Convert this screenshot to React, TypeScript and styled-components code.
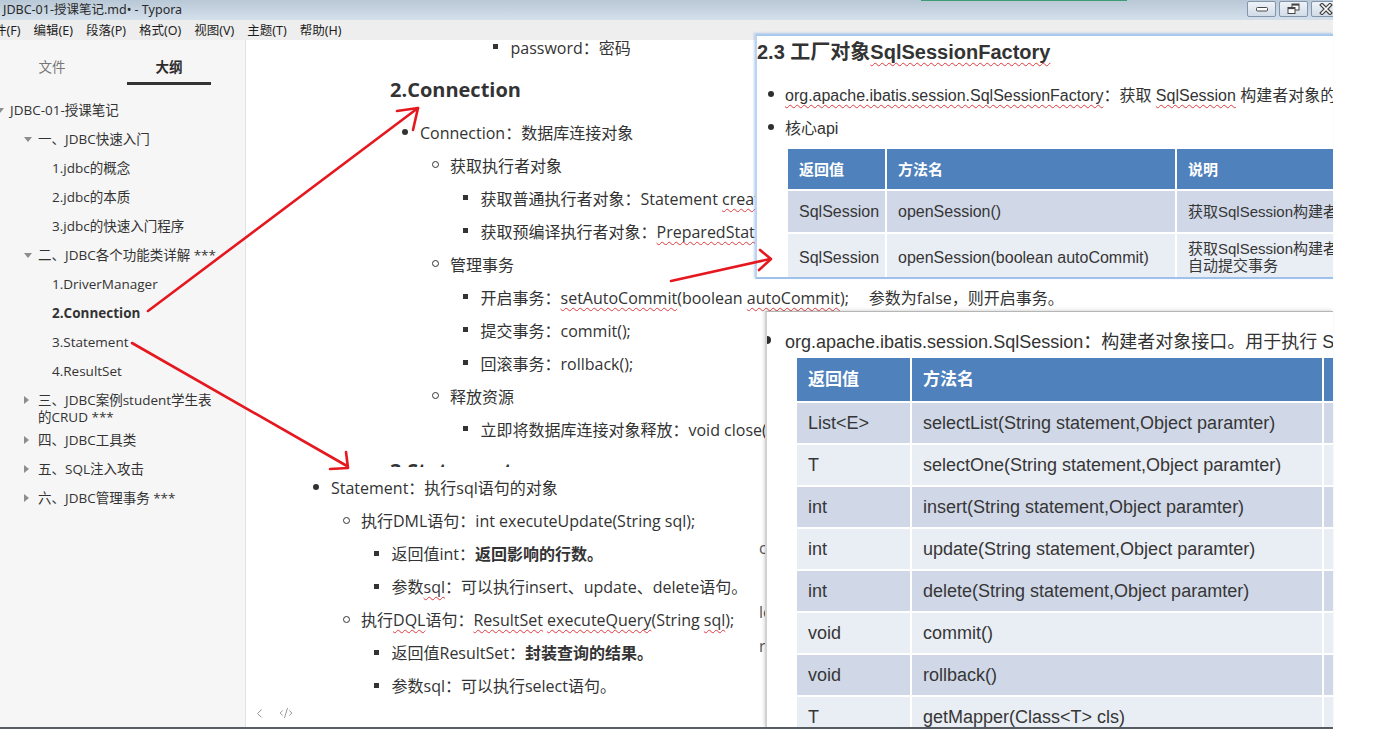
import React from 'react';
import styled, { createGlobalStyle, css } from 'styled-components';
import { ChevronLeft, CodeXml } from 'lucide-react';

const MAIN_FONT = `"Open Sans", "Noto Sans CJK SC", sans-serif`;
const SHOT_FONT = `"Liberation Sans", "Noto Sans CJK SC", sans-serif`;
const UI_FONT = `"Noto Sans", "Noto Sans CJK SC", sans-serif`;

const GlobalStyle = createGlobalStyle`
  html, body { margin: 0; padding: 0; background: #ffffff; }
  #root { width: 1388px; height: 729px; }
`;

const Page = styled.div`
  position: relative;
  width: 1388px;
  height: 729px;
  overflow: hidden;
  display: flex;
  background: #ffffff;
`;

const Window = styled.div`
  width: 1333px;
  height: 729px;
  flex: none;
  display: flex;
  flex-direction: column;
  overflow: hidden;
  box-sizing: border-box;
  border-bottom: 2px solid #595e65;
`;

const TitleBar = styled.div`
  position: relative;
  height: 20px;
  flex: none;
  display: flex;
  align-items: flex-start;
  padding-left: 3px;
  background: linear-gradient(#b9c8d6, #d4e0ec);
  &::before {
    content: '';
    position: absolute;
    left: 921px;
    top: 0;
    width: 206px;
    height: 1px;
    background: #3f9b70;
  }
`;

const TitleText = styled.span`
  flex: 1;
  font: 12.5px/20px ${UI_FONT};
  color: #2a2a2a;
`;

const WinControls = styled.div`
  display: flex;
  gap: 3px;
  margin-top: 1px;
  margin-right: -7px;
`;

const WinButton = styled.div`
  width: 29px;
  height: 16px;
  box-sizing: border-box;
  border: 1px solid #8395aa;
  border-radius: 2px;
  background: linear-gradient(#eef3f8, #d1dce8);
  display: flex;
  align-items: center;
  justify-content: center;
`;

const MenuBar = styled.div`
  height: 20px;
  flex: none;
  background: #eeeeee;
  display: flex;
  align-items: center;
`;

const MenuList = styled.div`
  display: flex;
  margin-left: -25px;
  padding-top: 2px;
`;

const MenuItem = styled.span`
  padding: 0 6.5px;
  font: 12.5px/18px ${UI_FONT};
  color: #1e1e1e;
  white-space: nowrap;
`;

const Body = styled.div`
  flex: 1;
  display: flex;
  min-height: 0;
`;

const Sidebar = styled.aside`
  width: 245px;
  flex: none;
  background: #f6f6f6;
  border-right: 1px solid #e2e2e2;
  display: flex;
  flex-direction: column;
  overflow: hidden;
  font-family: ${MAIN_FONT};
  color: #333;
`;

const Tabs = styled.div`
  display: flex;
  gap: 33px;
  padding-left: 10px;
`;

const Tab = styled.div<{ $active?: boolean }>`
  width: 84px;
  text-align: center;
  padding-top: 17px;
  padding-bottom: 5px;
  font-size: 13.5px;
  line-height: 20px;
  font-weight: ${p => (p.$active ? 700 : 400)};
  color: ${p => (p.$active ? '#2c2c2c' : '#777')};
  border-bottom: 3px solid ${p => (p.$active ? '#333' : 'transparent')};
`;

const Outline = styled.div`
  padding-top: 10.5px;
`;

const OutlineRow = styled.div<{ $indent: number; $active?: boolean; $wrapped?: boolean }>`
  display: flex;
  align-items: flex-start;
  padding: 6px 0 ${p => (p.$wrapped ? 0 : 6)}px ${p => p.$indent}px;
  font-size: 13.5px;
  line-height: 17px;
  font-weight: ${p => (p.$active ? 700 : 400)};
  white-space: nowrap;
`;

const CaretBox = styled.span<{ $shift?: number }>`
  flex: none;
  width: 14px;
  height: 17px;
  margin-left: ${p => p.$shift ?? 0}px;
  display: flex;
  align-items: center;
`;

const Main = styled.main`
  flex: 1;
  display: flex;
  flex-direction: column;
  background: #ffffff;
  min-width: 0;
`;

const Content = styled.div`
  flex: 1;
  overflow: hidden;
  color: #333;
  font-family: ${MAIN_FONT};
  font-size: 16px;
`;

const Section = styled.div<{ $left: number; $top?: number }>`
  position: relative;
  padding-left: ${p => p.$left}px;
  margin-top: ${p => p.$top ?? 0}px;
`;

const Heading = styled.div`
  font-size: 20px;
  font-weight: 700;
  line-height: 33px;
  margin: 10px 0 9px;
`;

const ClippedHeading = styled.div`
  height: 22px;
  overflow: hidden;
  margin-bottom: 3.5px;
  font-size: 20px;
  font-weight: 700;
  line-height: 33px;
  padding-top: 9px;
  box-sizing: border-box;
`;

const Row = styled.div<{ $indent: number }>`
  display: flex;
  align-items: center;
  height: 33px;
  padding-left: ${p => p.$indent}px;
  white-space: nowrap;
`;

type MarkerKind = 'disc' | 'circle' | 'square';

const Marker = styled.span<{ $kind: MarkerKind }>`
  flex: none;
  box-sizing: border-box;
  margin-left: -18px;
  ${p =>
    p.$kind === 'disc'
      ? css`
          width: 6px;
          height: 6px;
          border-radius: 50%;
          background: #333;
          margin-right: 12px;
        `
      : p.$kind === 'circle'
      ? css`
          width: 7px;
          height: 7px;
          border-radius: 50%;
          border: 1px solid #333;
          margin-right: 11px;
        `
      : css`
          width: 5px;
          height: 5px;
          background: #333;
          margin-right: 13px;
          margin-left: -17.5px;
        `}
`;

const Wavy = styled.span`
  text-decoration: underline wavy #e0393e;
  text-decoration-thickness: 1px;
  text-underline-offset: 3px;
  text-decoration-skip-ink: none;
`;

const Strong = styled.b`
  font-weight: 700;
`;

const Gap = styled.span`
  display: inline-block;
  width: 20px;
`;

const Remnant = styled.span<{ $top: number }>`
  position: absolute;
  left: 513px;
  top: ${p => p.$top}px;
  line-height: 33px;
  color: #555;
`;

const Footer = styled.div`
  height: 28px;
  flex: none;
  display: flex;
  align-items: center;
  gap: 12px;
  padding-left: 6px;
  color: #8c8c8c;
`;

/* ---------- pasted screenshots ---------- */

const FactoryShot = styled.div`
  position: absolute;
  left: 755px;
  top: 34px;
  width: 578px;
  height: 245px;
  box-sizing: border-box;
  background: #ffffff;
  overflow: hidden;
  border-top: 2px solid #a9c8ee;
  border-left: 2px solid #bcd4f1;
  border-bottom: 2px solid #9fc1ea;
  box-shadow: -1px -1px 2px rgba(110, 160, 225, 0.45);
  font-family: ${SHOT_FONT};
  color: #333;
  z-index: 2;
`;

const SessionShot = styled.div`
  position: absolute;
  left: 765px;
  top: 311px;
  width: 568px;
  height: 416px;
  box-sizing: border-box;
  background: #ffffff;
  overflow: hidden;
  border-top: 1px solid #b5b5b5;
  border-left: 2px solid #d2d2d2;
  box-shadow: -1px -1px 3px rgba(0, 0, 0, 0.15);
  font-family: ${SHOT_FONT};
  color: #333;
  z-index: 2;
`;

const ShotHeading = styled.div`
  margin-top: 1px;
  font-size: 20px;
  line-height: 30px;
  font-weight: 700;
  color: #333;
  white-space: nowrap;
`;

const ShotRow = styled.div<{ $indent: number; $size: number; $h: number; $top?: number }>`
  display: flex;
  align-items: center;
  height: ${p => p.$h}px;
  margin-top: ${p => p.$top ?? 0}px;
  padding-left: ${p => p.$indent}px;
  font-size: ${p => p.$size}px;
  white-space: nowrap;
`;

const ShotDot = styled.span<{ $size: number; $offset: number }>`
  flex: none;
  width: ${p => p.$size}px;
  height: ${p => p.$size}px;
  border-radius: 50%;
  background: #2f2f2f;
  margin-left: -${p => p.$offset}px;
  margin-right: ${p => p.$offset - p.$size}px;
`;

const Table = styled.div<{ $cols: string; $rows: string; $left: number; $top: number }>`
  display: grid;
  grid-template-columns: ${p => p.$cols};
  grid-template-rows: ${p => p.$rows};
  gap: 2px;
  margin-left: ${p => p.$left}px;
  margin-top: ${p => p.$top}px;
  background: #ffffff;
`;

type Tone = 'head' | 'dark' | 'light';

const Cell = styled.div<{ $tone: Tone; $size: number }>`
  display: flex;
  align-items: center;
  padding-left: 11px;
  overflow: hidden;
  white-space: nowrap;
  font-size: ${p => p.$size}px;
  line-height: 17px;
  background: ${p => (p.$tone === 'head' ? '#4f81bd' : p.$tone === 'dark' ? '#d0d8e8' : '#e9edf4')};
  color: ${p => (p.$tone === 'head' ? '#ffffff' : '#363636')};
  font-weight: ${p => (p.$tone === 'head' ? 700 : 400)};
`;

const Arrows = styled.svg`
  position: absolute;
  left: 0;
  top: 0;
  width: 1388px;
  height: 729px;
  pointer-events: none;
  z-index: 5;
`;

/* ---------- helpers ---------- */

function Item({ indent, kind, children }: { indent: number; kind: MarkerKind; children: React.ReactNode }) {
  return (
    <Row $indent={indent}>
      <Marker $kind={kind} />
      <span>{children}</span>
    </Row>
  );
}

function Caret({ dir }: { dir: 'down' | 'right' }) {
  return dir === 'down' ? (
    <svg width="8" height="5" viewBox="0 0 8 5">
      <path d="M0 0 L8 0 L4 5 Z" fill="#8d8d8d" />
    </svg>
  ) : (
    <svg width="5" height="8" viewBox="0 0 5 8">
      <path d="M0 0 L5 4 L0 8 Z" fill="#8d8d8d" />
    </svg>
  );
}

type OutlineEntry = { text: string[]; level: 0 | 1 | 2; caret?: 'down' | 'right'; active?: boolean };

const outline: OutlineEntry[] = [
  { text: ['JDBC-01-授课笔记'], level: 0, caret: 'down' },
  { text: ['一、JDBC快速入门'], level: 1, caret: 'down' },
  { text: ['1.jdbc的概念'], level: 2 },
  { text: ['2.jdbc的本质'], level: 2 },
  { text: ['3.jdbc的快速入门程序'], level: 2 },
  { text: ['二、JDBC各个功能类详解 ***'], level: 1, caret: 'down' },
  { text: ['1.DriverManager'], level: 2 },
  { text: ['2.Connection'], level: 2, active: true },
  { text: ['3.Statement'], level: 2 },
  { text: ['4.ResultSet'], level: 2 },
  { text: ['三、JDBC案例student学生表', '的CRUD ***'], level: 1, caret: 'right' },
  { text: ['四、JDBC工具类'], level: 1, caret: 'right' },
  { text: ['五、SQL注入攻击'], level: 1, caret: 'right' },
  { text: ['六、JDBC管理事务 ***'], level: 1, caret: 'right' },
];

const indentFor = (level: number) => (level === 0 ? 0 : level === 1 ? 24 : 52);

const sessionRows: [string, string, Tone][] = [
  ['List<E>', 'selectList(String statement,Object paramter)', 'dark'],
  ['T', 'selectOne(String statement,Object paramter)', 'light'],
  ['int', 'insert(String statement,Object paramter)', 'dark'],
  ['int', 'update(String statement,Object paramter)', 'light'],
  ['int', 'delete(String statement,Object paramter)', 'dark'],
  ['void', 'commit()', 'light'],
  ['void', 'rollback()', 'dark'],
  ['T', 'getMapper(Class<T> cls)', 'light'],
];

export default function App() {
  return (
    <>
      <GlobalStyle />
      <Page>
        <Window>
          <TitleBar>
            <TitleText>JDBC-01-授课笔记.md• - Typora</TitleText>
            <WinControls>
              <WinButton>
                <svg width="14" height="8" viewBox="0 0 14 8">
                  <rect x="1.5" y="2.5" width="11" height="3.5" rx="1" fill="#fdfdfd" stroke="#4a4a4a" />
                </svg>
              </WinButton>
              <WinButton>
                <svg width="13" height="12" viewBox="0 0 13 12">
                  <rect x="5" y="1" width="7" height="6" fill="#fdfdfd" stroke="#444" />
                  <rect x="5" y="1" width="7" height="1.6" fill="#444" />
                  <rect x="1" y="4.5" width="7" height="6" fill="#fdfdfd" stroke="#444" />
                  <rect x="1" y="4.5" width="7" height="1.6" fill="#444" />
                </svg>
              </WinButton>
              <WinButton>
                <svg width="14" height="12" viewBox="0 0 14 12">
                  <path d="M3 2 L11 10 M11 2 L3 10" stroke="#454545" strokeWidth="4" strokeLinecap="square" />
                  <path d="M3 2 L11 10 M11 2 L3 10" stroke="#fafafa" strokeWidth="1.6" strokeLinecap="square" />
                </svg>
              </WinButton>
            </WinControls>
          </TitleBar>

          <MenuBar>
            <MenuList>
              {['文件(F)', '编辑(E)', '段落(P)', '格式(O)', '视图(V)', '主题(T)', '帮助(H)'].map(m => (
                <MenuItem key={m}>{m}</MenuItem>
              ))}
            </MenuList>
          </MenuBar>

          <Body>
            <Sidebar>
              <Tabs>
                <Tab>文件</Tab>
                <Tab $active>大纲</Tab>
              </Tabs>
              <Outline>
                {outline.map((o, i) => (
                  <OutlineRow key={i} $indent={indentFor(o.level)} $active={o.active} $wrapped={o.text.length > 1}>
                    {o.caret && (
                      <CaretBox $shift={o.level === 0 ? -4 : 0}>
                        <Caret dir={o.caret} />
                      </CaretBox>
                    )}
                    <span>
                      {o.text.map((t, j) => (
                        <React.Fragment key={j}>
                          {j > 0 && <br />}
                          {t}
                        </React.Fragment>
                      ))}
                    </span>
                  </OutlineRow>
                ))}
              </Outline>
            </Sidebar>

            <Main>
              <Content>
                <Section $left={144} $top={-10}>
                  <Item indent={120} kind="square">password：密码</Item>
                  <Heading>2.Connection</Heading>
                  <Item indent={30} kind="disc">Connection：数据库连接对象</Item>
                  <Item indent={60} kind="circle">获取执行者对象</Item>
                  <Item indent={90} kind="square">
                    获取普通执行者对象：Statement <Wavy>createStatement</Wavy>();
                  </Item>
                  <Item indent={90} kind="square">
                    获取预编译执行者对象：<Wavy>PreparedStatement</Wavy> <Wavy>prepareStatement</Wavy>(String sql);
                  </Item>
                  <Item indent={60} kind="circle">管理事务</Item>
                  <Item indent={90} kind="square">
                    开启事务：<Wavy>setAutoCommit</Wavy>(boolean <Wavy>autoCommit</Wavy>);<Gap />参数为false，则开启事务。
                  </Item>
                  <Item indent={90} kind="square">提交事务：commit();</Item>
                  <Item indent={90} kind="square">回滚事务：rollback();</Item>
                  <Item indent={60} kind="circle">释放资源</Item>
                  <Item indent={90} kind="square">立即将数据库连接对象释放：void close();</Item>
                  <ClippedHeading>3.Statement</ClippedHeading>
                </Section>
                <Section $left={55}>
                  <Item indent={30} kind="disc">Statement：执行sql语句的对象</Item>
                  <Item indent={60} kind="circle">执行DML语句：int executeUpdate(String sql);</Item>
                  <Item indent={90} kind="square">
                    返回值int：<Strong>返回影响的行数。</Strong>
                  </Item>
                  <Item indent={90} kind="square">
                    参数<Wavy>sql</Wavy>：可以执行insert、update、delete语句。
                  </Item>
                  <Item indent={60} kind="circle">
                    执行<Wavy>DQL</Wavy>语句：<Wavy>ResultSet</Wavy> <Wavy>executeQuery</Wavy>(String <Wavy>sql</Wavy>);
                  </Item>
                  <Item indent={90} kind="square">
                    返回值ResultSet：<Strong>封装查询的结果。</Strong>
                  </Item>
                  <Item indent={90} kind="square">参数sql：可以执行select语句。</Item>
                  <Remnant $top={61}>c</Remnant>
                  <Remnant $top={125}>le</Remnant>
                  <Remnant $top={159}>ri</Remnant>
                </Section>
              </Content>
              <Footer>
                <ChevronLeft size={15} strokeWidth={1.5} />
                <CodeXml size={14} strokeWidth={1.5} />
              </Footer>
            </Main>
          </Body>
        </Window>

        <FactoryShot>
          <ShotHeading>
            2.3 工厂对象<Wavy>SqlSessionFactory</Wavy>
          </ShotHeading>
          <ShotRow $indent={28} $size={16} $h={33} $top={10.5}>
            <ShotDot $size={6} $offset={17} />
            <span>
              <Wavy>org.apache.ibatis.session.SqlSessionFactory</Wavy>：获取 <Wavy>SqlSession</Wavy> 构建者对象的工厂接口
            </span>
          </ShotRow>
          <ShotRow $indent={28} $size={16} $h={33}>
            <ShotDot $size={6} $offset={17} />
            <span>核心api</span>
          </ShotRow>
          <Table $cols="97px 288px 200px" $rows="40px 41px 46px" $left={31} $top={5.5}>
            <Cell $tone="head" $size={15}>返回值</Cell>
            <Cell $tone="head" $size={15}>方法名</Cell>
            <Cell $tone="head" $size={15}>说明</Cell>
            <Cell $tone="dark" $size={16}>SqlSession</Cell>
            <Cell $tone="dark" $size={16}>openSession()</Cell>
            <Cell $tone="dark" $size={15}>获取SqlSession构建者对象</Cell>
            <Cell $tone="light" $size={16}>SqlSession</Cell>
            <Cell $tone="light" $size={16}>openSession(boolean autoCommit)</Cell>
            <Cell $tone="light" $size={15}>
              获取SqlSession构建者对象，并开启
              <br />
              自动提交事务
            </Cell>
          </Table>
        </FactoryShot>

        <SessionShot>
          <ShotRow $indent={18} $size={18} $h={34} $top={11}>
            <ShotDot $size={8} $offset={22} />
            <span>org.apache.ibatis.session.SqlSession：构建者对象接口。用于执行 SQL、管理事务、接口代理。</span>
          </ShotRow>
          <Table $cols="113px 410px 40px" $rows="43px repeat(8, 40px)" $left={30} $top={1}>
            <Cell $tone="head" $size={17}>返回值</Cell>
            <Cell $tone="head" $size={17}>方法名</Cell>
            <Cell $tone="head" $size={17}>说明</Cell>
            {sessionRows.map(([r, m, tone], i) => (
              <React.Fragment key={i}>
                <Cell $tone={tone} $size={18}>{r}</Cell>
                <Cell $tone={tone} $size={18}>{m}</Cell>
                <Cell $tone={tone} $size={18}>执行</Cell>
              </React.Fragment>
            ))}
          </Table>
        </SessionShot>

        <Arrows viewBox="0 0 1388 729">
          <g stroke="#e6181f" strokeWidth="2.6" strokeLinecap="round" strokeLinejoin="round" fill="none">
            <line x1="148" y1="311" x2="418" y2="108" />
            <polyline points="397,111 418,108 413,130" />
            <line x1="671" y1="281" x2="770" y2="259" />
            <polyline points="760,250 771,259 759,270" />
            <line x1="132" y1="343" x2="347" y2="466" />
            <polyline points="346,452 348,468 330,469" />
          </g>
        </Arrows>
      </Page>
    </>
  );
}
